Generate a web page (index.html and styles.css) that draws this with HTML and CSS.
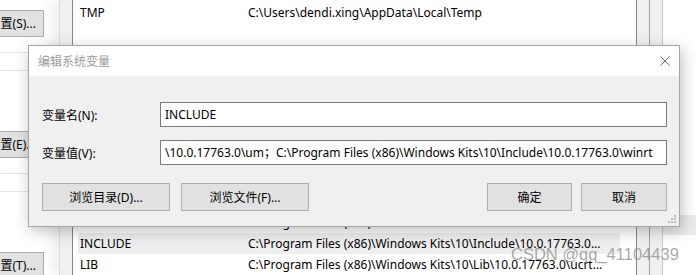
FILE: index.html
```html
<!DOCTYPE html>
<html lang="zh-CN">

<head>
    <meta charset="UTF-8">
    <title>编辑系统变量</title>
    <link rel="stylesheet" href="styles.css">
</head>

<body>

    <div class="desk">
        <!-- 系统属性 (后面的窗口) -->
        <div class="sys">
            <div class="sys-group">
                <div class="sys-btn">设置(S)...</div>
                <div class="sys-rule"></div>
                <div class="sys-rule"></div>
            </div>
            <div class="sys-group">
                <div class="sys-btn">设置(E)...</div>
                <div class="sys-rule"></div>
                <div class="sys-rule"></div>
            </div>
            <div class="sys-group">
                <div class="sys-btn">设置(T)...</div>
            </div>
        </div>

        <!-- 环境变量 -->
        <div class="env">
            <div class="var-list">
                <div class="var-row"><span class="var-name">TEMP</span><span class="var-value">C:\Users\dendi.xing\AppData\Local\Temp</span></div>
                <div class="var-row"><span class="var-name">TMP</span><span class="var-value">C:\Users\dendi.xing\AppData\Local\Temp</span></div>
                <div class="var-gap"></div>
                <div class="var-row"><span class="var-name">DriverData</span><span class="var-value">C:\Program Files (x86)\Windows Kits\10\bin\10.0.17763.0\x64</span></div>
                <div class="var-row selected"><span class="var-name">INCLUDE</span><span class="var-value">C:\Program Files (x86)\Windows Kits\10\Include\10.0.17763.0...</span></div>
                <div class="var-row"><span class="var-name">LIB</span><span class="var-value">C:\Program Files (x86)\Windows Kits\10\Lib\10.0.17763.0\ucrt...</span></div>
            </div>
        </div>
        <div class="sys-edge"></div>
        <div class="outside">
            <div class="outside-band"></div>
        </div>

        <!-- 编辑系统变量 对话框 -->
        <div class="dialog">
            <div class="dialog-title">
                <span>编辑系统变量</span>
                <svg class="close" width="10" height="10" viewBox="0 0 10 10">
                    <path d="M0.5 0.5 L9.5 9.5 M9.5 0.5 L0.5 9.5" stroke="#6d6d6d" stroke-width="1" fill="none" />
                </svg>
            </div>
            <div class="dialog-body">
                <div class="field">
                    <label for="varName" class="field-label">变量名(N):</label>
                    <div class="field-input" id="varName">INCLUDE</div>
                </div>
                <div class="field">
                    <label for="varValue" class="field-label">变量值(V):</label>
                    <div class="field-input" id="varValue">\10.0.17763.0\um；C:\Program Files (x86)\Windows Kits\10\Include\10.0.17763.0\winrt</div>
                </div>
                <div class="btn-row">
                    <div class="btn-group">
                        <button class="btn btn-wide">浏览目录(D)...</button>
                        <button class="btn btn-wide">浏览文件(F)...</button>
                    </div>
                    <div class="btn-group btn-group-end">
                        <button class="btn btn-small">确定</button>
                        <button class="btn btn-small btn-cancel">取消</button>
                    </div>
                </div>
            </div>
            <svg class="grip" width="9" height="9" viewBox="0 0 9 9">
                <rect x="6" y="0" width="2" height="2" fill="#bcbcbc" />
                <rect x="3" y="3" width="2" height="2" fill="#bcbcbc" />
                <rect x="6" y="3" width="2" height="2" fill="#bcbcbc" />
                <rect x="0" y="6" width="2" height="2" fill="#bcbcbc" />
                <rect x="3" y="6" width="2" height="2" fill="#bcbcbc" />
                <rect x="6" y="6" width="2" height="2" fill="#bcbcbc" />
            </svg>
        </div>

        <div class="watermark">CSDN @qq_41104439</div>
    </div>

</body>

</html>
```

FILE: styles.css
```css
body {
    margin: 0;
    font-family: "Noto Sans", "Noto Sans CJK SC", sans-serif;
    font-size: 12px;
    color: #000;
    background-color: #fff;
}

.desk {
    position: relative;
    display: flex;
    width: 696px;
    height: 275px;
    overflow: hidden;
    background-color: #fff;
}

/* 系统属性 */
.sys {
    width: 59px;
    flex: none;
    background-color: #fff;
}

.sys-group {
    height: 121px;
    padding-top: 10px;
    box-sizing: border-box;
}

.sys-btn {
    width: 80px;
    height: 27px;
    margin-left: -36px;
    box-sizing: border-box;
    padding-right: 7px;
    background-color: #e1e1e1;
    border: 1px solid #adadad;
    line-height: 25px;
    text-align: right;
    white-space: nowrap;
}

.sys-rule {
    width: 45px;
    height: 1px;
    margin-top: 15px;
    background-color: #e3e3e3;
}

.sys-rule + .sys-rule {
    margin-top: 17px;
}

/* 环境变量 */
.env {
    width: 591px;
    flex: none;
    padding: 0 12px;
    box-sizing: border-box;
    background-color: #f0f0f0;
    border-left: 1px solid #dadada;
    border-right: 1px solid #a0a0a0;
    box-shadow: -6px 0 12px rgba(0, 0, 0, 0.08);
}

.var-list {
    margin-top: -19px;
    height: 320px;
    background-color: #fff;
    border: 1px solid #828790;
    border-top: none;
}

.var-row {
    display: flex;
    width: 542px;
    height: 21px;
    margin-left: 5px;
    padding-left: 2px;
    box-sizing: border-box;
    line-height: 21px;
    white-space: nowrap;
}

.var-row.selected {
    background-color: #eeeeee;
}

.var-name {
    width: 168px;
    flex: none;
}

.var-value {
    flex: none;
}

.var-gap {
    height: 189px;
}

.sys-edge {
    width: 12px;
    flex: none;
    background-color: #f0f0f0;
    border-right: 1px solid #c8c8c8;
}

.outside {
    flex: 1;
    padding-top: 215px;
}

.outside-band {
    height: 20px;
    background-color: #ececec;
}

/* 对话框 */
.dialog {
    position: absolute;
    left: 28px;
    top: 45px;
    width: 650px;
    height: 180px;
    background-color: #f0f0f0;
    border: 1px solid #a6a6a6;
    box-shadow: 2px 4px 14px rgba(0, 0, 0, 0.25);
}

.dialog-title {
    display: flex;
    align-items: center;
    justify-content: space-between;
    height: 30px;
    padding: 0 9px 0 9px;
    background-color: #fff;
    color: #9b9b9b;
}

.dialog-body {
    padding: 26px 12px 15px 13px;
}

.field {
    display: flex;
    align-items: center;
    margin-bottom: 13px;
}

.field-label {
    width: 118px;
    flex: none;
}

.field-input {
    flex: 1;
    height: 25px;
    padding-left: 4px;
    box-sizing: border-box;
    background-color: #fff;
    border: 1px solid #7a7a7a;
    line-height: 23px;
    white-space: nowrap;
    overflow: hidden;
}

.btn-row {
    display: flex;
    justify-content: space-between;
    margin-top: 18px;
}

.btn-group {
    display: flex;
    gap: 11px;
}

.btn-group-end {
    gap: 9px;
}

.btn {
    height: 28px;
    padding: 0;
    font-family: "Noto Sans", "Noto Sans CJK SC", sans-serif;
    font-size: 12px;
    color: #000;
    background-color: #e1e1e1;
    border: 1px solid #adadad;
    border-radius: 0;
}

.btn-wide {
    width: 128px;
}

.btn-small {
    width: 85px;
}

.btn-cancel {
    width: 86px;
}

.grip {
    position: absolute;
    right: 2px;
    bottom: 2px;
}

.watermark {
    position: absolute;
    left: 511px;
    top: 245px;
    font-family: "Liberation Sans", sans-serif;
    font-size: 16.5px;
    color: rgba(140, 140, 140, 0.75);
    white-space: nowrap;
}
```
